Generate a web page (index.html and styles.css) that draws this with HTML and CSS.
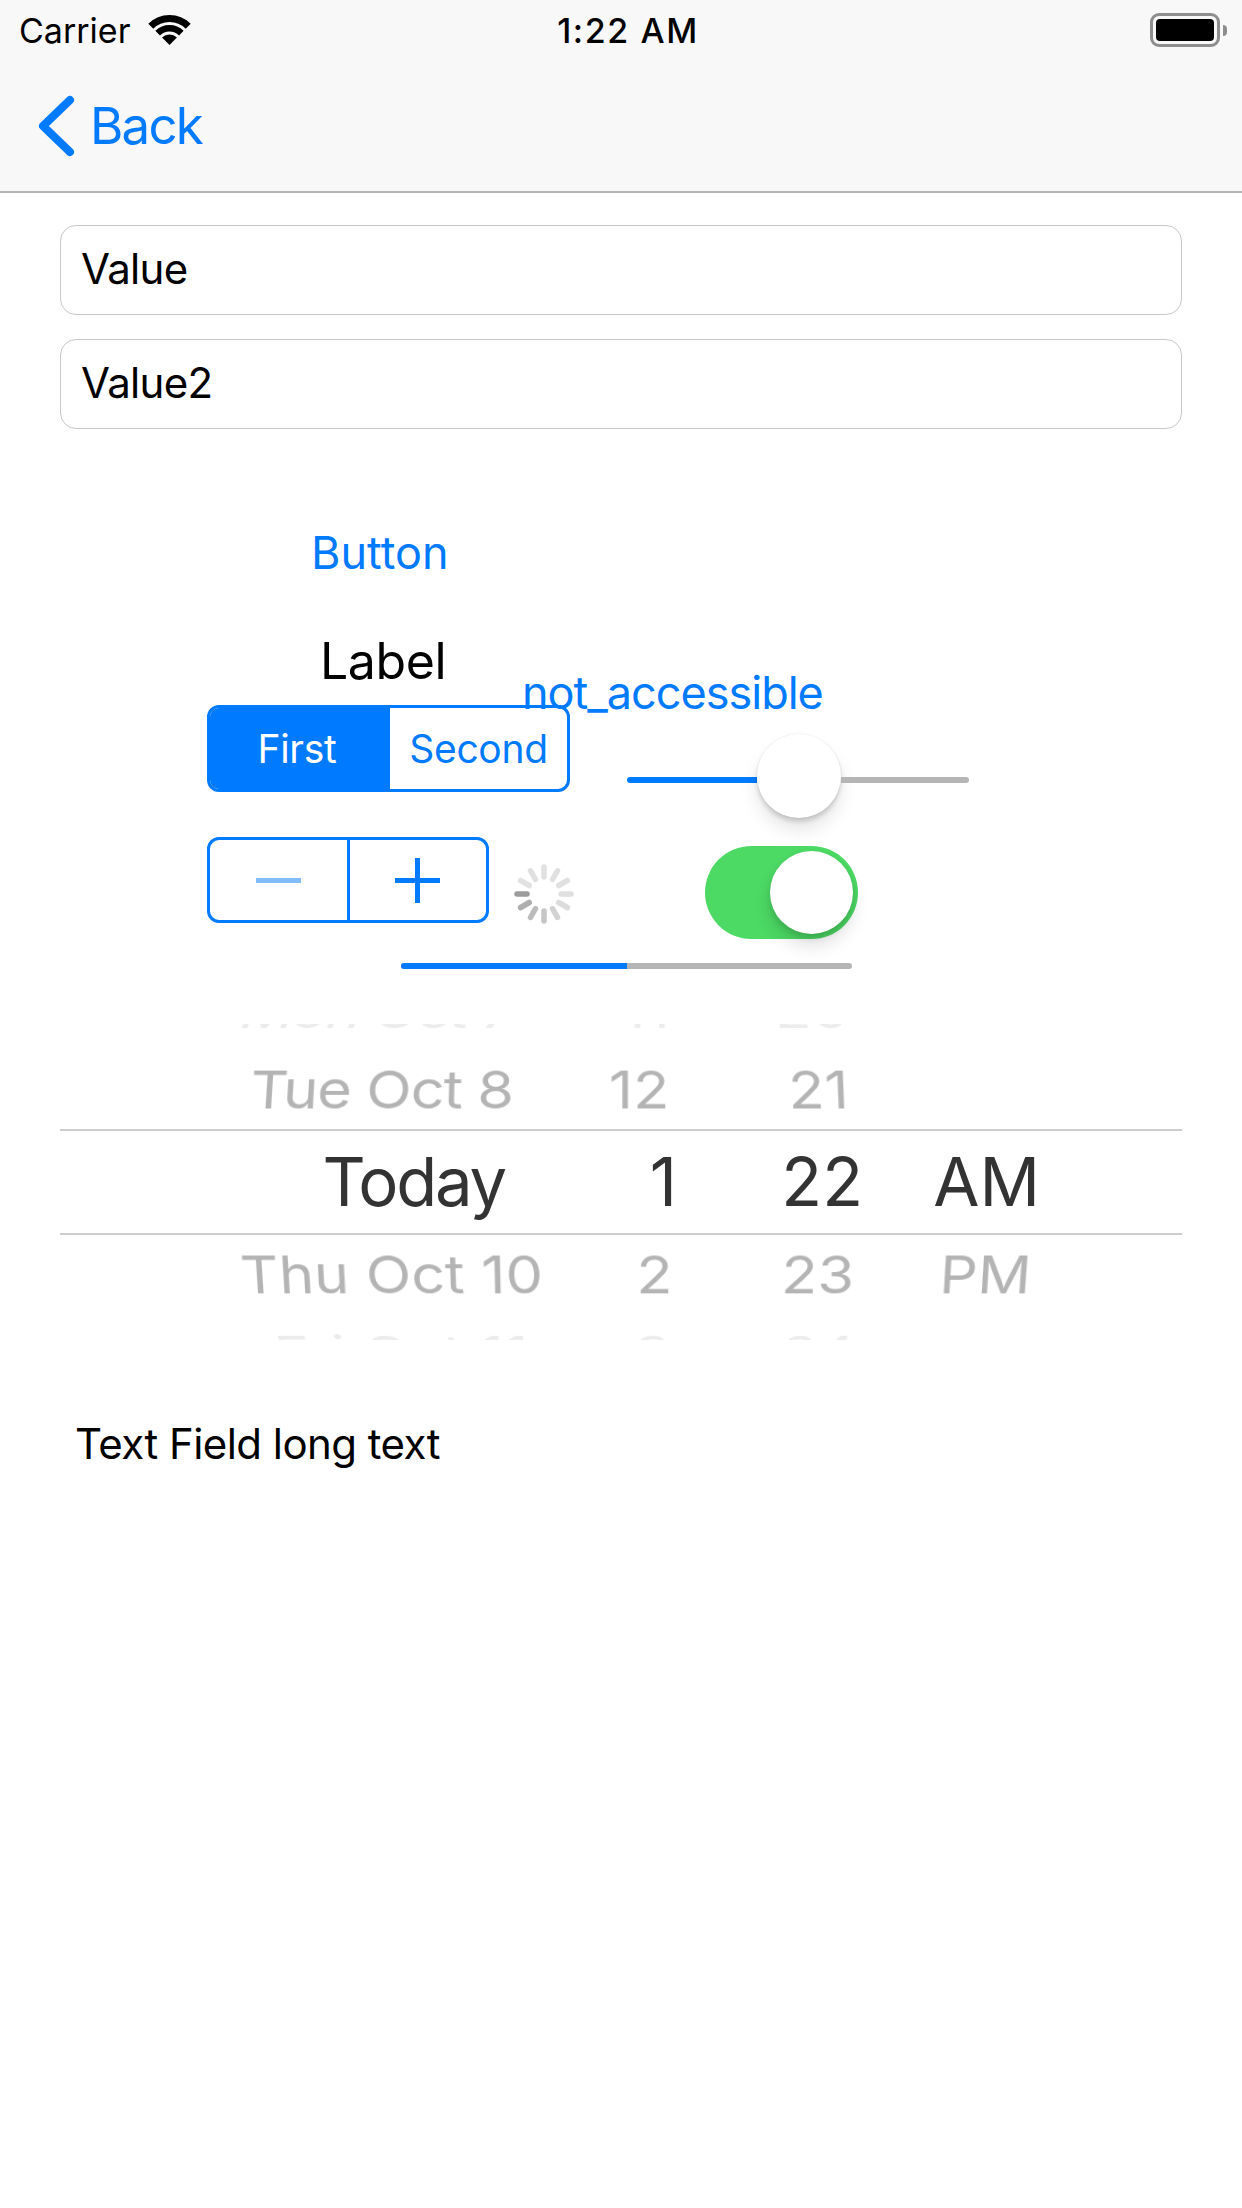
FILE: index.html
```html
<!DOCTYPE html>
<html>
<head>
    <title>Controls</title>
    <link rel="stylesheet" href="styles.css">
</head>
<body>
    <header class="top-bar">
        <div class="status-bar">
            <div class="status-left">
                <span>Carrier</span>
                <svg class="wifi" width="43" height="30" viewBox="0 0 43 30">
                    <path d="M2.8 11.3A26.5 26.5 0 0 1 40.2 11.3" fill="none" stroke="#000" stroke-width="7"/>
                    <path d="M9.66 18.16A16.75 16.75 0 0 1 33.34 18.16" fill="none" stroke="#000" stroke-width="6.5"/>
                    <path d="M21.5 30L14.08 22.58A10.5 10.5 0 0 1 28.92 22.58Z" fill="#000"/>
                </svg>
            </div>
            <div class="status-time">1:22 AM</div>
            <div class="battery">
                <div class="battery-body"><div class="battery-level"></div></div>
                <div class="battery-nub"></div>
            </div>
        </div>
        <div class="nav-bar">
            <svg class="chevron" width="37" height="62" viewBox="0 0 37 62">
                <path d="M32 5L5 31L32 57" fill="none" stroke="#007aff" stroke-width="8" stroke-linecap="round" stroke-linejoin="round"/>
            </svg>
            <span>Back</span>
        </div>
    </header>

    <section class="fields">
        <div class="field">Value</div>
        <div class="field">Value2</div>
    </section>

    <section class="controls">
        <div class="button-row">Button</div>
        <div class="label-row">Label</div>

        <div class="row-first">
            <span class="overlap-link">not_accessible</span>
            <div class="segmented">
                <div class="segment segment-on">First</div>
                <div class="segment">Second</div>
            </div>
            <div class="slider">
                <div class="track track-min"></div>
                <div class="slider-thumb"></div>
                <div class="track track-max"></div>
            </div>
        </div>

        <div class="row-second">
            <div class="stepper">
                <div class="stepper-cell">
                    <svg width="45" height="45" viewBox="0 0 45 45"><rect x="0" y="20" width="45" height="5" fill="#80bcff"/></svg>
                </div>
                <div class="stepper-cell stepper-plus">
                    <svg width="45" height="45" viewBox="0 0 45 45"><path d="M0 20H20V0H25V20H45V25H25V45H20V25H0Z" fill="#007aff"/></svg>
                </div>
            </div>
            <svg class="spinner" width="60" height="60" viewBox="0 0 60 60" fill="none" stroke-width="5.5" stroke-linecap="round">
                <path d="M30 3V13" stroke="#e0e0e0"/>
                <path d="M30 3V13" stroke="#e0e0e0" transform="rotate(30 30 30)"/>
                <path d="M30 3V13" stroke="#e0e0e0" transform="rotate(60 30 30)"/>
                <path d="M30 3V13" stroke="#e0e0e0" transform="rotate(90 30 30)"/>
                <path d="M30 3V13" stroke="#dcdcdc" transform="rotate(120 30 30)"/>
                <path d="M30 3V13" stroke="#d2d2d2" transform="rotate(150 30 30)"/>
                <path d="M30 3V13" stroke="#c6c6c6" transform="rotate(180 30 30)"/>
                <path d="M30 3V13" stroke="#bcbcbc" transform="rotate(210 30 30)"/>
                <path d="M30 3V13" stroke="#aeaeae" transform="rotate(240 30 30)"/>
                <path d="M30 3V13" stroke="#9c9c9c" transform="rotate(270 30 30)"/>
                <path d="M30 3V13" stroke="#e2e2e2" transform="rotate(300 30 30)"/>
                <path d="M30 3V13" stroke="#e0e0e0" transform="rotate(330 30 30)"/>
            </svg>
            <div class="switch"><div class="switch-thumb"></div></div>
        </div>

        <div class="progress"><div class="progress-fill"></div></div>

        <div class="picker">
            <div class="picker-row row-mon">
                <span>Mon Oct 7</span><span>11</span><span>20</span><span></span>
            </div>
            <div class="picker-row row-tue">
                <span>Tue Oct 8</span><span>12</span><span>21</span><span></span>
            </div>
            <div class="picker-row row-today">
                <span>Today</span><span>1</span><span>22</span><span>AM</span>
            </div>
            <div class="picker-row row-thu">
                <span>Thu Oct 10</span><span>2</span><span>23</span><span>PM</span>
            </div>
            <div class="picker-row row-fri">
                <span>Fri Oct 11</span><span>3</span><span>24</span><span></span>
            </div>
        </div>

        <div class="long-text">Text Field long text</div>
    </section>
</body>
</html>
```

FILE: styles.css
```css
html, body {
  margin: 0;
  padding: 0;
  background: #fff;
}

body {
  width: 1242px;
  height: 2208px;
  overflow: hidden;
  font-family: Inter, "Liberation Sans", sans-serif;
  color: #000;
}

/* top bars */
.top-bar {
  background: #f8f8f8;
  border-bottom: 2px solid #b4b4b4;
}

.status-bar {
  height: 60px;
  display: grid;
  grid-template-columns: 1fr auto 1fr;
  align-items: center;
  padding: 0 11px 0 19px;
  font-size: 34px;
}

.status-left {
  display: flex;
  align-items: center;
  gap: 18px;
}

.status-time {
  padding-left: 6px;
  font-weight: 500;
  letter-spacing: 1.6px;
}

.battery {
  display: flex;
  align-items: center;
  justify-content: flex-end;
  margin-right: 4px;
}

.battery-body {
  width: 70px;
  height: 34px;
  box-sizing: border-box;
  border: 3px solid #8e8e8e;
  border-radius: 9px;
  padding: 3px;
}

.battery-level {
  height: 100%;
  background: #000;
  border-radius: 4px;
}

.battery-nub {
  width: 4px;
  height: 11px;
  margin-left: 3px;
  background: #8e8e8e;
  border-radius: 0 4px 4px 0;
}

.nav-bar {
  height: 131px;
  display: flex;
  align-items: center;
  gap: 15px;
  padding-left: 38px;
  font-size: 51px;
  letter-spacing: -1.8px;
  color: #007aff;
}

/* text fields */
.fields {
  display: flex;
  flex-direction: column;
  gap: 24px;
  padding: 32px 60px 0;
}

.field {
  height: 90px;
  box-sizing: border-box;
  display: flex;
  align-items: center;
  padding: 0 0 4px 20px;
  border: 1px solid #c8c8c8;
  border-radius: 16px;
  font-size: 42px;
  letter-spacing: -0.7px;
}

/* controls */
.button-row {
  margin: 94px 0 0 311px;
  font-size: 45px;
  line-height: 60px;
  color: #007aff;
}

.label-row {
  margin: 48px 0 0 320px;
  font-size: 50px;
  letter-spacing: -0.4px;
  line-height: 60px;
}

.row-first {
  position: relative;
  display: flex;
  height: 87px;
  margin: 14px 0 0 207px;
}

.overlap-link {
  position: absolute;
  left: 315px;
  top: -42px;
  font-size: 45px;
  letter-spacing: -1px;
  line-height: 60px;
  color: #007aff;
}

.segmented {
  width: 363px;
  height: 87px;
  box-sizing: border-box;
  display: flex;
  border: 3px solid #007aff;
  border-radius: 12px;
  overflow: hidden;
  color: #007aff;
  font-size: 39px;
  letter-spacing: -0.3px;
}

.segment {
  flex: 1;
  display: flex;
  align-items: center;
  justify-content: center;
}

.segment-on {
  flex: none;
  box-sizing: border-box;
  width: 180px;
  padding-right: 6px;
  background: #007aff;
  color: #fff;
}

.slider {
  display: flex;
  align-items: center;
  width: 342px;
  height: 92px;
  margin: 29px 0 0 57px;
}

.track {
  height: 6px;
}

.track-min {
  width: 130px;
  background: #007aff;
  border-radius: 3px 0 0 3px;
}

.track-max {
  flex: 1;
  background: #b5b5b5;
  border-radius: 0 3px 3px 0;
}

.slider-thumb {
  width: 84px;
  height: 84px;
  margin-bottom: 8px;
  border-radius: 50%;
  background: #fff;
  box-shadow: 0 12px 18px rgba(0, 0, 0, 0.1), 0 4px 4px rgba(0, 0, 0, 0.14), 0 0 2px rgba(0, 0, 0, 0.1);
}

.row-second {
  display: flex;
  align-items: flex-start;
  margin: 45px 0 0 207px;
}

.stepper {
  width: 282px;
  height: 86px;
  box-sizing: border-box;
  display: flex;
  border: 3px solid #007aff;
  border-radius: 12px;
}

.stepper-cell {
  flex: 1;
  display: flex;
  align-items: center;
  justify-content: center;
}

.stepper-plus {
  border-left: 3px solid #007aff;
}

.spinner {
  margin: 27px 0 0 25px;
}

.switch {
  width: 153px;
  height: 93px;
  box-sizing: border-box;
  display: flex;
  align-items: center;
  justify-content: flex-end;
  margin: 9px 0 0 131px;
  padding-right: 5px;
  border-radius: 47px;
  background: #4cd964;
}

.switch-thumb {
  width: 83px;
  height: 83px;
  border-radius: 50%;
  background: #fff;
  box-shadow: 0 12px 18px rgba(0, 0, 0, 0.12), 0 4px 6px rgba(0, 0, 0, 0.12);
}

.progress {
  width: 451px;
  height: 6px;
  margin: 24px 0 0 401px;
  background: #b5b5b5;
  border-radius: 3px;
  overflow: hidden;
}

.progress-fill {
  width: 226px;
  height: 100%;
  background: #007aff;
}

/* date picker */
.picker {
  height: 316px;
  margin: 55px 60px 0;
  overflow: hidden;
}

.picker-row {
  display: grid;
  align-items: center;
  justify-items: end;
  font-size: 54px;
  color: #b4b4b4;
}

.row-mon {
  grid-template-columns: 463px 142px 161px 159px;
  height: 73px;
  margin-top: -48px;
  color: #ececec;
  transform: perspective(700px) rotateX(38deg) scaleX(1.1);
}

.row-mon span:first-child {
  letter-spacing: -2px;
}

.row-tue {
  grid-template-columns: 463px 142px 163px 159px;
  height: 80px;
  transform: perspective(1400px) rotateX(14deg) scaleX(1.1);
}

.row-tue span:first-child {
  letter-spacing: -1px;
}

.row-today {
  grid-template-columns: 445px 172px 186px 177px;
  height: 106px;
  box-sizing: border-box;
  padding-bottom: 1px;
  border-top: 2px solid #cdcdcd;
  border-bottom: 2px solid #cdcdcd;
  font-size: 67px;
  color: #333;
}

.row-today span:first-child {
  letter-spacing: -2.2px;
}

.row-thu {
  grid-template-columns: 490px 118px 165px 161px;
  height: 79px;
  transform: perspective(1400px) rotateX(-14deg) scaleX(1.1);
}

.row-fri {
  grid-template-columns: 478px 128px 166px 159px;
  height: 74px;
  color: #ececec;
  transform: perspective(700px) rotateX(-38deg) scaleX(1.1);
}

.long-text {
  margin: 74px 0 0 75px;
  font-size: 42px;
  letter-spacing: -0.55px;
  line-height: 60px;
}
```
